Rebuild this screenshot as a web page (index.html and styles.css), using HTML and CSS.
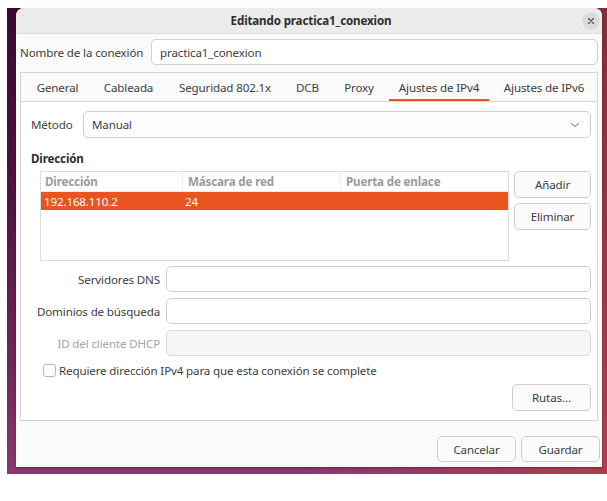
FILE: index.html
```html
<!DOCTYPE html>
<html lang="es">
<head>
<meta charset="utf-8">
<title>Editando practica1_conexion</title>
<link rel="stylesheet" href="styles.css">
</head>
<body>
<div class="desktop">
  <div class="dialog">
    <div class="titlebar">
      <span class="title">Editando practica1_conexion</span>
      <span class="close">
        <svg width="18" height="18" viewBox="0 0 18 18"><path d="M6.5 6.5 L11.5 11.5 M11.5 6.5 L6.5 11.5" stroke="#4a4a4a" stroke-width="1.1" fill="none" stroke-linecap="round"/></svg>
      </span>
    </div>
    <div class="body">
      <div class="name-row">
        <span class="name-label">Nombre de la conexión</span>
        <div class="entry">practica1_conexion</div>
      </div>
      <div class="notebook">
        <div class="tabs">
          <div class="tab">General</div>
          <div class="tab">Cableada</div>
          <div class="tab">Seguridad 802.1x</div>
          <div class="tab">DCB</div>
          <div class="tab">Proxy</div>
          <div class="tab active">Ajustes de IPv4</div>
          <div class="tab">Ajustes de IPv6</div>
        </div>
        <div class="page">
          <div class="method-row">
            <span class="method-label">Método</span>
            <div class="combo">
              <span>Manual</span>
              <svg width="10" height="6" viewBox="0 0 10 6"><path d="M1.5 1.5 L5 4.5 L8.5 1.5" stroke="#666" stroke-width="1" fill="none" stroke-linecap="round" stroke-linejoin="round"/></svg>
            </div>
          </div>
          <div class="section-title">Dirección</div>
          <div class="addr-row">
            <div class="tree">
              <div class="tree-head">
                <div class="col c1">Dirección</div>
                <div class="col c2">Máscara de red</div>
                <div class="col c3">Puerta de enlace</div>
              </div>
              <div class="tree-row selected">
                <div class="cell c1">192.168.110.2</div>
                <div class="cell c2">24</div>
                <div class="cell c3"></div>
              </div>
            </div>
            <div class="addr-buttons">
              <div class="btn">Añadir</div>
              <div class="btn">Eliminar</div>
            </div>
          </div>
          <div class="form-grid">
            <span class="form-label">Servidores DNS</span>
            <div class="entry"></div>
            <span class="form-label">Dominios de búsqueda</span>
            <div class="entry"></div>
            <span class="form-label disabled">ID del cliente DHCP</span>
            <div class="entry entry-disabled"></div>
          </div>
          <div class="check-row">
            <span class="checkbox"></span>
            <span>Requiere dirección IPv4 para que esta conexión se complete</span>
          </div>
          <div class="routes-row">
            <div class="btn btn-routes">Rutas…</div>
          </div>
        </div>
      </div>
      <div class="footer">
        <div class="btn btn-foot">Cancelar</div>
        <div class="btn btn-foot">Guardar</div>
      </div>
    </div>
  </div>
</div>
</body>
</html>
```
FILE: styles.css
```css
html, body {
  margin: 0;
  padding: 0;
  background: #ffffff;
}
body {
  font-family: "Noto Sans", "DejaVu Sans", sans-serif;
  font-size: 11.6px;
  letter-spacing: -0.15px;
  color: #3d3d3d;
}
.desktop {
  margin: 8px 0 0 7px;
  width: 600px;
  height: 466px;
  box-sizing: border-box;
  padding: 0 5px 7px 9px;
  background:
    linear-gradient(100deg, rgba(176,60,70,0) 55%, rgba(180,62,72,0.85) 100%),
    linear-gradient(to bottom, #3b0a2b 0%, #4f1340 40%, #6e2458 75%, #8c3872 100%);
}
.dialog {
  height: 459px;
  display: flex;
  flex-direction: column;
  background: #fafafa;
  border-radius: 8px 8px 0 0;
  overflow: hidden;
  box-shadow: 0 1px 2px rgba(0,0,0,0.35);
}
.titlebar {
  height: 25px;
  flex: none;
  background: #ebebeb;
  border-bottom: 1px solid #dcdcdc;
  display: flex;
  align-items: center;
  justify-content: center;
  position: relative;
}
.title {
  font-weight: bold;
  color: #2e2e2e;
  margin-left: 4px;
}
.close {
  position: absolute;
  right: 2px;
  top: 4px;
  width: 18px;
  height: 18px;
  border-radius: 50%;
  background: #dcdcdc;
  display: flex;
}
.body {
  flex: 1;
  display: flex;
  flex-direction: column;
  padding: 5px 4px 4px 4px;
}
.name-row {
  display: flex;
  align-items: center;
  height: 26px;
}
.name-label {
  width: 131px;
  flex: none;
}
.entry {
  flex: 1;
  height: 26px;
  box-sizing: border-box;
  border: 1px solid #d2cdc8;
  border-radius: 5px;
  background: #ffffff;
  display: flex;
  align-items: center;
  padding-left: 8px;
}
.entry-disabled {
  background: #f6f6f6;
  border-color: #dcd8d4;
}
.notebook {
  margin-top: 7px;
  height: 349px;
  box-sizing: border-box;
  border: 1px solid #d9d5d1;
  background: #ffffff;
  display: flex;
  flex-direction: column;
}
.tabs {
  height: 28px;
  flex: none;
  background: #fafafa;
  border-bottom: 1px solid #d9d5d1;
  display: grid;
  grid-template-columns: 61px 71px 112px 43px 50px 100px 100px;
  column-gap: 5px;
  padding-left: 6px;
}
.tab {
  display: flex;
  align-items: center;
  justify-content: center;
  white-space: nowrap;
  box-sizing: border-box;
  border-bottom: 2px solid transparent;
  padding-top: 2px;
}
.tab.active {
  border-bottom-color: #e95420;
}
.page {
  flex: 1;
  padding: 9px 6px 0 10px;
  display: flex;
  flex-direction: column;
}
.method-row {
  display: flex;
  align-items: center;
  height: 27px;
}
.method-label {
  width: 52px;
  flex: none;
}
.combo {
  flex: 1;
  height: 27px;
  box-sizing: border-box;
  border: 1px solid #d2cdc8;
  border-radius: 5px;
  background: #fdfdfd;
  display: flex;
  align-items: center;
  justify-content: space-between;
  padding: 0 10px 0 8px;
}
.section-title {
  font-weight: bold;
  margin-top: 13px;
  height: 16px;
  line-height: 16px;
  color: #2e2e2e;
}
.addr-row {
  margin-top: 4px;
  display: flex;
  gap: 5px;
  padding-left: 9px;
}
.tree {
  width: 469px;
  height: 90px;
  box-sizing: border-box;
  border: 1px solid #dcdcdc;
  background: #ffffff;
}
.tree-head, .tree-row {
  display: grid;
  grid-template-columns: 141px 158px 1fr;
}
.tree-head {
  height: 20px;
  border-bottom: 1px solid #ececec;
  box-sizing: border-box;
}
.col {
  font-weight: bold;
  color: #9a9a9a;
  padding-left: 5px;
  display: flex;
  align-items: center;
  border-left: 1px solid #ececec;
}
.col.c1 { border-left: none; padding-left: 4px; }
.tree-row {
  height: 18px;
}
.tree-row.selected {
  background: #e95420;
  color: #ffffff;
}
.cell {
  display: flex;
  align-items: center;
  padding-left: 3px;
}
.addr-buttons {
  width: 77px;
  display: flex;
  flex-direction: column;
  gap: 5px;
}
.btn {
  height: 27px;
  box-sizing: border-box;
  border: 1px solid #d2cdc8;
  border-radius: 5px;
  background: #fbfbfb;
  display: flex;
  align-items: center;
  justify-content: center;
  color: #3d3d3d;
}
.form-grid {
  margin-top: 5px;
  display: grid;
  grid-template-columns: 129px 1fr;
  column-gap: 6px;
  row-gap: 6px;
  align-items: center;
}
.form-label {
  text-align: right;
}
.form-label.disabled {
  color: #a3a3a3;
}
.check-row {
  margin-top: 6px;
  height: 16px;
  display: flex;
  align-items: center;
  gap: 3px;
  padding-left: 12px;
}
.checkbox {
  width: 13px;
  height: 13px;
  box-sizing: border-box;
  border: 1px solid #b9b5b1;
  border-radius: 3px;
  background: #ffffff;
}
.routes-row {
  margin-top: 6px;
  display: flex;
  justify-content: flex-end;
}
.btn-routes {
  width: 79px;
}
.footer {
  margin-top: 15px;
  display: flex;
  justify-content: flex-end;
  gap: 5px;
  margin-right: -2px;
}
.btn-foot {
  width: 79px;
  height: 26px;
}
```
